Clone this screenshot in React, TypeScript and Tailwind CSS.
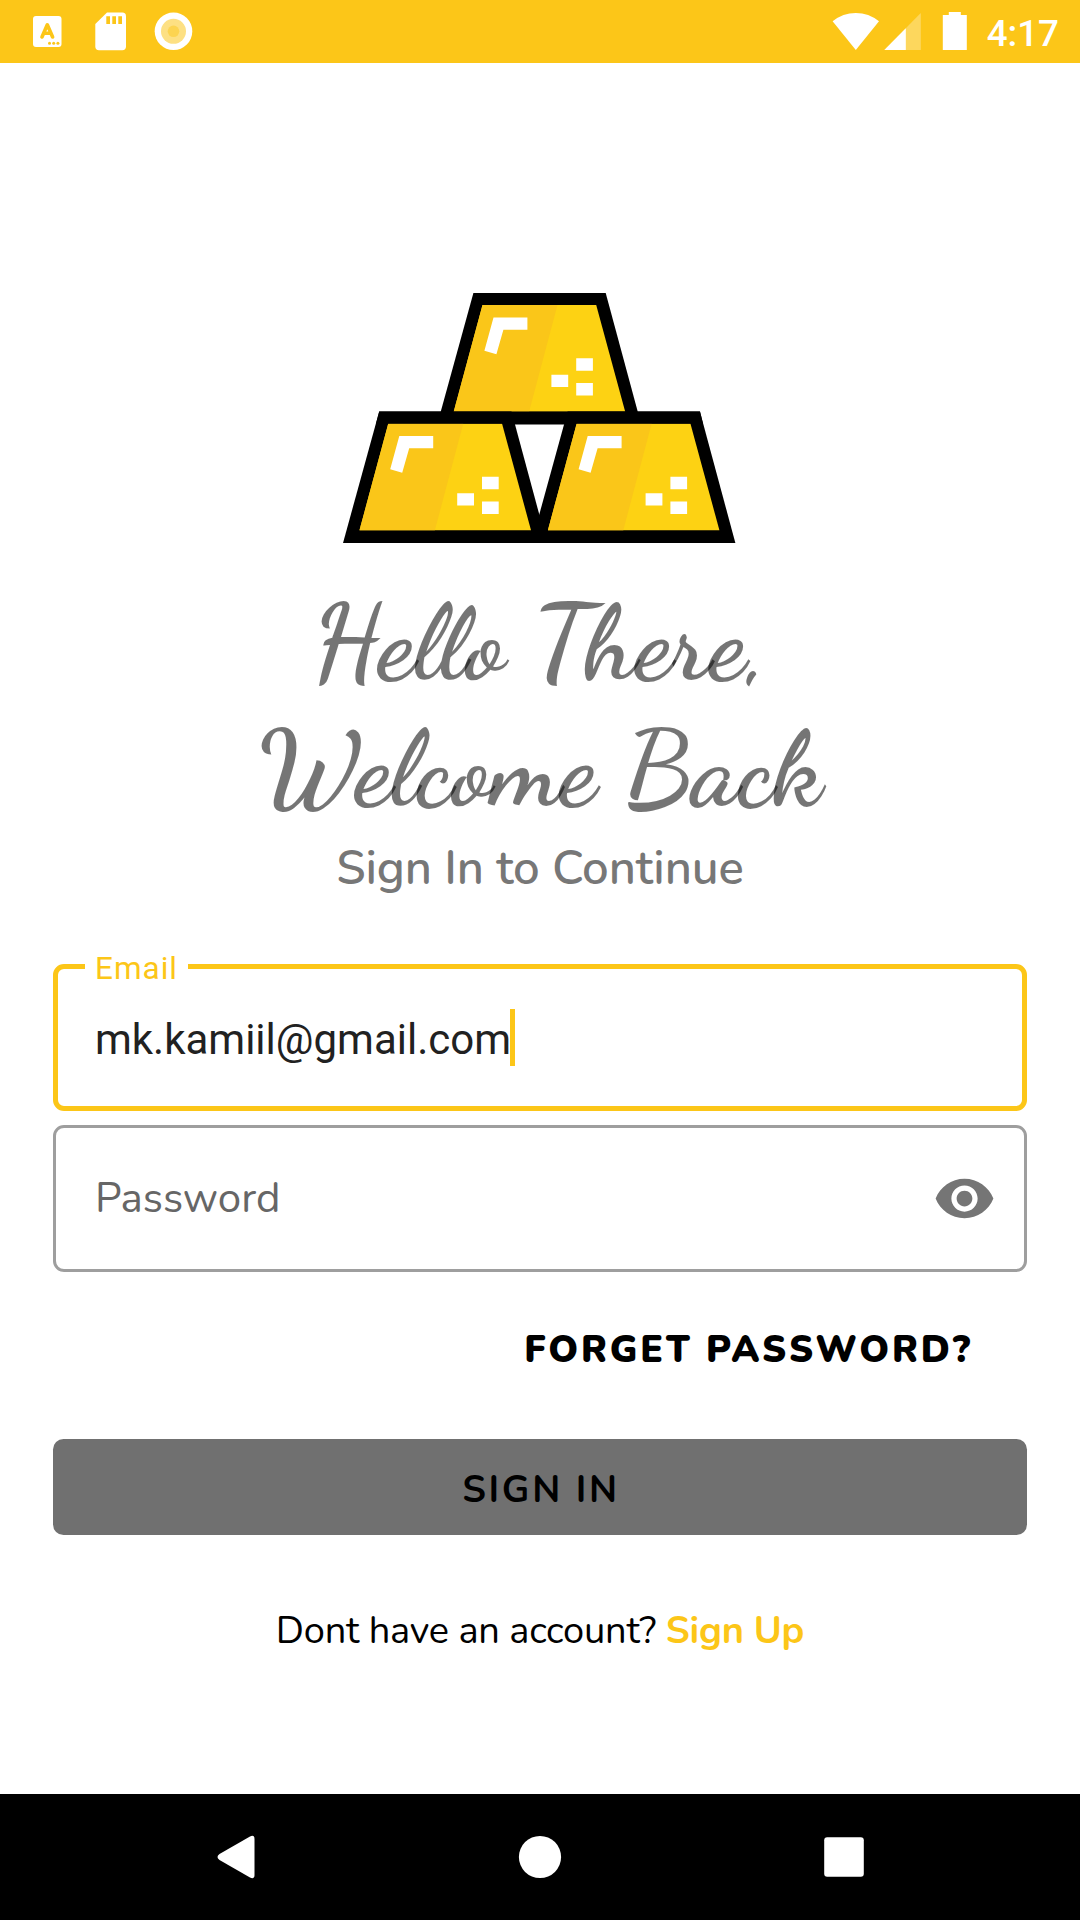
function GoldBar({ x, y }: { x: number; y: number }) {
  return (
    <g transform={`translate(${x} ${y})`}>
      <path d="M31.2 0H163.5L199 131.6H-5Z" fill="#000" />
      <path d="M40.3 12H154L183 118.7H11.5Z" fill="#fdd213" />
      <path d="M40.3 12H115.3L86.9 118.7H11.5Z" fill="#fac619" />
      <path d="M51.3 24.5H85.2V36.7H61.2L54.2 61.2L42.2 57.7Z" fill="#fff" />
      <path d="M134 65.2H150.7V77.7H134ZM109.2 81.8H126V94H109.2ZM134 90H150.7V102.5H134Z" fill="#fff" />
    </g>
  );
}

function Logo() {
  return (
    <svg className="mx-auto mt-[230px] block h-[250px] w-[394px]" viewBox="0 0 394 250" aria-label="Gold bars">
      <GoldBar x={99.2} y={0} />
      <GoldBar x={5} y={118.5} />
      <GoldBar x={193.4} y={118.5} />
      <path d="M36.2 118.5H357L360 130.7H33Z" fill="#000" />
    </svg>
  );
}

function StatusBar() {
  return (
    <header className="flex h-[63px] shrink-0 justify-between bg-[#fcc618]">
      <svg className="h-[63px] w-[240px]" viewBox="0 0 240 63">
        <rect x="33" y="16" width="28.5" height="31" rx="3" fill="#fff" />
        <path d="M42 37L47.3 24.8L52.6 37M43.8 33.2H50.8" fill="none" stroke="#fcc618" strokeWidth="3.6" strokeLinecap="round" strokeLinejoin="round" />
        <g fill="#fcc618">
          <circle cx="49.5" cy="43.2" r="1.5" />
          <circle cx="53.7" cy="43.2" r="1.5" />
          <circle cx="57.9" cy="43.2" r="1.5" />
        </g>
        <path d="M107 12.5H122.3Q126 12.5 126 16.2V46.6Q126 50.3 122.3 50.3H99Q95.3 50.3 95.3 46.6V24Z" fill="#fff" />
        <path d="M106.3 16.3H110V24H106.3ZM112.3 16.3H116V24H112.3ZM118.3 16.3H122V24H118.3Z" fill="#fcc618" />
        <circle cx="173.5" cy="31.3" r="18.8" fill="#fff" />
        <circle cx="173.5" cy="31.3" r="12.5" fill="#fde083" />
        <circle cx="173.5" cy="31.3" r="5.8" fill="#fcd451" />
      </svg>
      <div className="flex pr-[21px]">
        <svg className="h-[63px] w-[150px]" viewBox="837.2 0 150 63" overflow="visible">
          <path d="M832.8 21.3Q843 13 856 13Q869 13 879.2 21.3L856 50Z" fill="#fff" />
          <path d="M884.5 50L921 13V50Z" fill="#fff" fillOpacity=".3" />
          <path d="M884.5 50L906 28.3V50Z" fill="#fff" />
          <path d="M949 12H961V15H967V50H943V15H949Z" fill="#fff" />
        </svg>
        <span className="pt-[6px] font-['Roboto',sans-serif] text-[36.75px] leading-[56px] font-medium text-white">4:17</span>
      </div>
    </header>
  );
}

export default function App() {
  return (
    <div className="flex h-[1920px] w-[1080px] flex-col overflow-hidden bg-white font-['Nunito','Lato',sans-serif]">
      <StatusBar />
      <main className="flex-1 px-[53px]">
        <Logo />
        <h1 className="mt-[37px] text-center font-['Dancing_Script',cursive] text-[105px] leading-[126px] font-bold text-black/54">
          Hello There,
          <br />
          Welcome Back
        </h1>
        <p className="mt-[5px] text-center text-[47.25px] leading-[64px] font-semibold tracking-[-0.13px] text-black/54">Sign In to Continue</p>

        <div className="relative mt-[63px] flex h-[147px] items-center rounded-[11px] border-[5px] border-[#fcc618] pl-[37px]">
          <span className="absolute -top-[18px] left-[27px] h-[36px] w-[103px] bg-white pl-[10px] font-['Roboto',sans-serif] text-[31.5px] leading-[36px] tracking-[1px] text-[#fcc618]">
            Email
          </span>
          <span className="pt-[4px] font-['Roboto',sans-serif] text-[42px] leading-[50px] text-[#212121]">mk.kamiil@gmail.com</span>
          <span className="-ml-px h-[57px] w-[5px] bg-[#fcc618]" />
        </div>

        <div className="mt-[14px] flex h-[147px] items-center justify-between rounded-[11px] border-[3px] border-[#9e9e9e] pr-[28px] pl-[39px]">
          <span className="text-[42px] leading-[58px] text-[#666]">Password</span>
          <svg className="h-[63px] w-[63px]" viewBox="0 0 24 24" fill="#757575">
            <path d="M12 4.5C7 4.5 2.73 7.61 1 12c1.73 4.39 6 7.5 11 7.5s9.27-3.11 11-7.5c-1.73-4.39-6-7.5-11-7.5zM12 17c-2.76 0-5-2.24-5-5s2.24-5 5-5 5 2.24 5 5-2.24 5-5 5zm0-8c-1.66 0-3 1.34-3 3s1.34 3 3 3 3-1.34 3-3-1.34-3-3-3z" />
          </svg>
        </div>

        <div className="mt-[53px] flex justify-end pr-[54px]">
          <button className="text-[37px] leading-[50px] font-black tracking-[2.85px] text-black">FORGET PASSWORD?</button>
        </div>

        <button className="mt-[64px] flex h-[96px] w-full items-center justify-center rounded-[10.5px] bg-[#707070] pt-[5px] pl-[2px] text-[37.5px] leading-[50px] font-bold tracking-[2.7px] text-black">
          SIGN IN
        </button>

        <p className="mt-[71px] text-center text-[38px] leading-[50px] tracking-[-0.23px] text-black">
          Dont have an account? <span className="font-bold text-[#fcc618]">Sign Up</span>
        </p>
      </main>
      <nav className="h-[126px] shrink-0 bg-black">
        <svg className="h-[126px] w-[1080px]" viewBox="0 0 1080 126" fill="#fff">
          <path d="M250 42.4Q254.5 40.5 254.5 45V81Q254.5 85.5 250 83.6L219.5 66Q215.5 63 219.5 60Z" />
          <circle cx="540" cy="63" r="21.1" />
          <rect x="824.2" y="43.2" width="39.6" height="39.6" rx="3" />
        </svg>
      </nav>
    </div>
  );
}
